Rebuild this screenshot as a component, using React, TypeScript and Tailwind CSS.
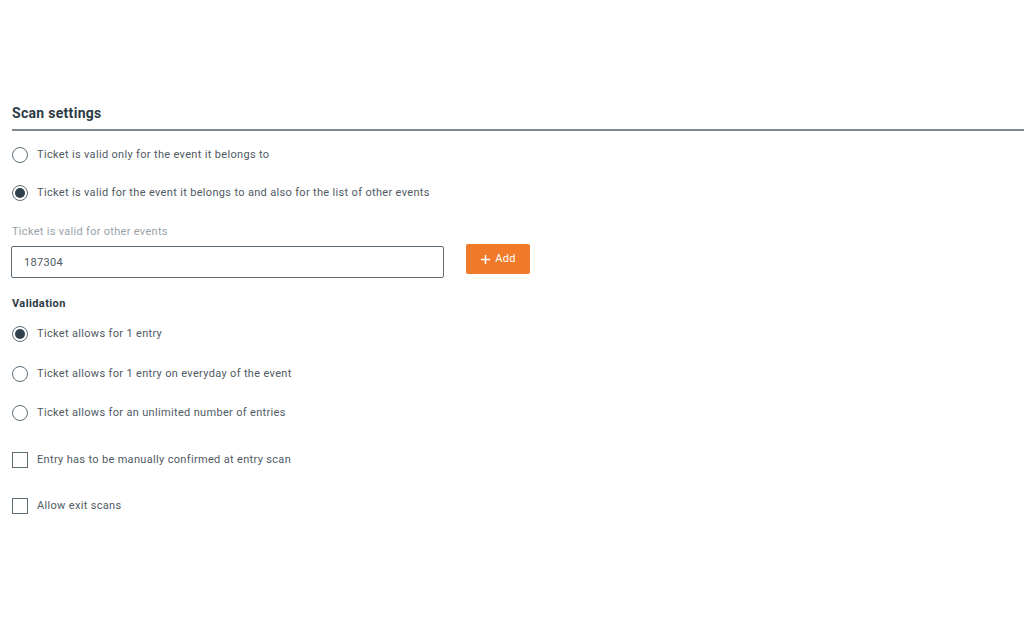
import { useState } from 'react'

function Radio({ checked, label, onClick }: { checked: boolean; label: string; onClick: () => void }) {
  return (
    <button type="button" onClick={onClick} className="flex items-center gap-[9px] text-left">
      <span className="flex h-[16px] w-[16px] shrink-0 items-center justify-center rounded-full border border-[#5f6d77] bg-white">
        {checked && <span className="h-[10px] w-[10px] rounded-full bg-[#2f3f4b]" />}
      </span>
      <span className="text-[11px] leading-[14px] tracking-[0.33px] text-[#4f5a63]">{label}</span>
    </button>
  )
}

function Checkbox({ checked, label, onClick }: { checked: boolean; label: string; onClick: () => void }) {
  return (
    <button type="button" onClick={onClick} className="flex items-center gap-[9px] text-left">
      <span className="flex h-[16px] w-[16px] shrink-0 items-center justify-center border border-[#5f6d77] bg-white">
        {checked && (
          <svg viewBox="0 0 16 16" className="h-3 w-3" fill="none" stroke="#2f3f4b" strokeWidth={2}>
            <path d="M3 8l3 3 7-7" />
          </svg>
        )}
      </span>
      <span className="text-[11px] leading-[14px] tracking-[0.33px] text-[#4f5a63]">{label}</span>
    </button>
  )
}

export default function App() {
  const [scope, setScope] = useState('list')
  const [validation, setValidation] = useState('once')
  const [manual, setManual] = useState(false)
  const [exitScans, setExitScans] = useState(false)
  const [events, setEvents] = useState('187304')

  return (
    <div className="min-h-[627px] bg-white pt-[105px] font-['Roboto',sans-serif]">
      {/* Header */}
      <div className="ml-[12px] border-b-2 border-[#7d8a94] pb-[8px]">
        <h2 className="text-[14px] font-bold leading-[16px] tracking-[0.3px] text-[#2d3a44]">Scan settings</h2>
      </div>

      <div className="flex flex-col px-[12px]">
        <div className="mt-[16px] flex flex-col gap-[22px]">
          <Radio checked={scope === 'own'} label="Ticket is valid only for the event it belongs to" onClick={() => setScope('own')} />
          <Radio
            checked={scope === 'list'}
            label="Ticket is valid for the event it belongs to and also for the list of other events"
            onClick={() => setScope('list')}
          />
        </div>

        <label className="mt-[24px] text-[11px] leading-[14px] tracking-[0.3px] text-[#9aa2a8]">Ticket is valid for other events</label>
        <div className="mt-[5px] flex items-start gap-[22px]">
          <input
            value={events}
            onChange={(e) => setEvents(e.target.value)}
            className="-ml-px mt-[2px] h-[32px] w-[433px] rounded-[2px] border border-[#5f6b74] px-[12px] text-[11px] tracking-[0.3px] text-[#4f5a63] outline-none"
          />
          <button
            type="button"
            className="flex h-[30px] w-[64px] items-center justify-center gap-[4px] rounded-[2px] bg-[#f07a2a] text-[11px] tracking-[0.3px] text-white"
          >
            <svg viewBox="0 0 12 12" className="h-[11px] w-[11px]" fill="none" stroke="white" strokeWidth={1.6}>
              <path d="M6 1v10M1 6h10" />
            </svg>
            Add
          </button>
        </div>

        <h3 className="mt-[19px] text-[11px] font-bold leading-[14px] tracking-[0.4px] text-[#2d3a44]">Validation</h3>

        <div className="mt-[15px] flex flex-col gap-[24px]">
          <Radio checked={validation === 'once'} label="Ticket allows for 1 entry" onClick={() => setValidation('once')} />
          <Radio
            checked={validation === 'daily'}
            label="Ticket allows for 1 entry on everyday of the event"
            onClick={() => setValidation('daily')}
          />
          <div className="-mt-px">
            <Radio
              checked={validation === 'unlimited'}
              label="Ticket allows for an unlimited number of entries"
              onClick={() => setValidation('unlimited')}
            />
          </div>
        </div>

        <div className="mt-[31px] flex flex-col gap-[30px]">
          <Checkbox checked={manual} label="Entry has to be manually confirmed at entry scan" onClick={() => setManual(!manual)} />
          <Checkbox checked={exitScans} label="Allow exit scans" onClick={() => setExitScans(!exitScans)} />
        </div>
      </div>
    </div>
  )
}
